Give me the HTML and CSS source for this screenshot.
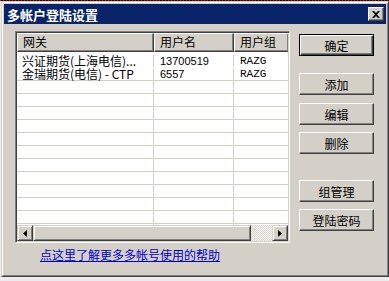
FILE: index.html
```html
<!DOCTYPE html>
<html lang="zh">
<head>
  <meta charset="UTF-8" />
  <title>多帐户登陆设置</title>
  <link rel="stylesheet" href="styles.css">
</head>
<body>

<div class="screen">
  <div class="dialog">
    <div class="titlebar">
      <span class="title">多帐户登陆设置</span>
      <span class="close">
        <svg width="8" height="7" viewBox="0 0 8 7"><path d="M0 0h2l2 2 2-2h2L5 3.5 8 7H6L4 5 2 7H0l3-3.5z" fill="#000"/></svg>
      </span>
    </div>

    <div class="client">
      <div class="main">
        <!-- 帐户列表 -->
        <div class="list">
          <div class="lv-head">
            <div class="hcell c1">网关</div>
            <div class="hcell c2">用户名</div>
            <div class="hcell c3">用户组</div>
          </div>
          <div class="lv-body">
            <div class="row first"><div class="cell c1">兴证期货(上海电信)...</div><div class="cell c2 num">13700519</div><div class="cell c3 mono">RAZG</div></div>
            <div class="row"><div class="cell c1">金瑞期货(电信) - CTP</div><div class="cell c2 num">6557</div><div class="cell c3 mono">RAZG</div></div>
            <div class="row"><div class="cell c1"></div><div class="cell c2"></div><div class="cell c3"></div></div>
            <div class="row"><div class="cell c1"></div><div class="cell c2"></div><div class="cell c3"></div></div>
            <div class="row"><div class="cell c1"></div><div class="cell c2"></div><div class="cell c3"></div></div>
            <div class="row"><div class="cell c1"></div><div class="cell c2"></div><div class="cell c3"></div></div>
            <div class="row"><div class="cell c1"></div><div class="cell c2"></div><div class="cell c3"></div></div>
            <div class="row"><div class="cell c1"></div><div class="cell c2"></div><div class="cell c3"></div></div>
            <div class="row"><div class="cell c1"></div><div class="cell c2"></div><div class="cell c3"></div></div>
            <div class="row"><div class="cell c1"></div><div class="cell c2"></div><div class="cell c3"></div></div>
            <div class="row"><div class="cell c1"></div><div class="cell c2"></div><div class="cell c3"></div></div>
            <div class="row"><div class="cell c1"></div><div class="cell c2"></div><div class="cell c3"></div></div>
            <div class="row"><div class="cell c1"></div><div class="cell c2"></div><div class="cell c3"></div></div>
            <div class="row"><div class="cell c1"></div><div class="cell c2"></div><div class="cell c3"></div></div>
          </div>
          <div class="hscroll">
            <span class="sb-btn"><svg width="4" height="7" viewBox="0 0 4 7"><path d="M4 0v7L0 3.5z" fill="#000"/></svg></span>
            <span class="sb-thumb"></span>
            <span class="sb-track"></span>
            <span class="sb-btn"><svg width="4" height="7" viewBox="0 0 4 7"><path d="M0 0v7l4-3.5z" fill="#000"/></svg></span>
          </div>
        </div>
        <a class="help" href="#">点这里了解更多多帐号使用的帮助</a>
      </div>

      <!-- 按钮 -->
      <div class="buttons">
        <button class="btn default">确定</button>
        <button class="btn b-add">添加</button>
        <button class="btn b-edit">编辑</button>
        <button class="btn b-del">删除</button>
        <button class="btn b-group">组管理</button>
        <button class="btn b-pwd">登陆密码</button>
      </div>
    </div>
  </div>
</div>

</body>
</html>
```

FILE: styles.css
```css
body { margin: 0; font-family: "Noto Sans CJK SC", sans-serif; font-size: 12px; color: #000; }
.screen { width: 389px; height: 281px; overflow: hidden; background: repeating-linear-gradient(90deg, #f00 0 1px, #000 1px 3px) top / 100% 1px no-repeat, #ececec; padding-top: 1px; box-sizing: border-box; }

.dialog { margin-left: 1px; width: 388px; height: 276px; box-sizing: border-box; background: #d4d0c8; border: 1px solid; border-color: #d4d0c8 #404040 #404040 #d4d0c8; box-shadow: inset 1px 1px #fff, inset -1px -1px #808080; padding: 2px; }

.titlebar { height: 20px; background: #0a246a; display: flex; align-items: center; justify-content: space-between; padding: 0 2px 0 3px; }
.title { color: #fff; font-weight: bold; font-size: 13px; line-height: 15px; }
.close { width: 16px; height: 14px; box-sizing: border-box; background: #d4d0c8; border: 1px solid; border-color: #fff #404040 #404040 #fff; box-shadow: inset -1px -1px #808080; display: flex; align-items: center; justify-content: center; }

.client { display: flex; gap: 9px; padding: 7px 0 0 11px; }

.list { width: 275px; height: 212px; box-sizing: border-box; border: 1px solid; border-color: #808080 #fff #fff #808080; box-shadow: inset 1px 1px #404040, inset -1px -1px #d4d0c8; padding: 1px; display: flex; flex-direction: column; overflow: hidden; }
.lv-head { display: flex; height: 19px; flex: none; background: #d4d0c8; }
.hcell { box-sizing: border-box; height: 19px; line-height: 16px; padding-left: 5px; border: 1px solid; border-color: #fff #404040 #404040 #fff; box-shadow: inset -1px -1px #808080; white-space: nowrap; overflow: hidden; }
.lv-body { flex: 1; background: #fff; overflow: hidden; padding-top: 3px; }
.row { display: flex; height: 13px; box-sizing: border-box; border-bottom: 1px solid #d4d0c8; }
.row.first { border-bottom-color: #fff; }
.cell { box-sizing: border-box; height: 12px; line-height: 12px; padding-left: 5px; border-right: 1px solid #d4d0c8; white-space: nowrap; }
.c1 { width: 137px; flex: none; }
.c2 { width: 80px; flex: none; }
.c3 { flex: 1; border-right: none; }
.cell.c2, .cell.c3 { padding-left: 6px; }
.num { font-family: "Liberation Sans", sans-serif; font-size: 11px; }
.mono { font-family: "Liberation Mono", monospace; font-size: 11px; }

.hscroll { display: flex; height: 16px; flex: none; }
.sb-btn { width: 16px; height: 16px; box-sizing: border-box; background: #d4d0c8; border: 1px solid; border-color: #d4d0c8 #404040 #404040 #d4d0c8; box-shadow: inset 1px 1px #fff, inset -1px -1px #808080; display: flex; align-items: center; justify-content: center; flex: none; }
.sb-thumb { width: 218px; box-sizing: border-box; background: #d4d0c8; border: 1px solid; border-color: #d4d0c8 #404040 #404040 #d4d0c8; box-shadow: inset 1px 1px #fff, inset -1px -1px #808080; }
.sb-track { flex: 1; background: repeating-conic-gradient(#fff 0 25%, #d4d0c8 0 50%) 0 0 / 2px 2px; }

.help { display: block; margin: 5px 0 0 25px; line-height: 14px; color: #0000cc; text-decoration: underline; }

.buttons { display: flex; flex-direction: column; padding-top: 3px; }
.btn { width: 75px; height: 22px; box-sizing: border-box; padding: 0; background: #d4d0c8; font-family: "Noto Sans CJK SC", sans-serif; font-size: 12px; color: #000; border: 1px solid; border-color: #fff #404040 #404040 #fff; box-shadow: inset -1px -1px #808080; }
.btn.default { border-color: #000; box-shadow: inset 1px 1px #fff, inset -1px -1px #404040, inset -2px -2px #808080; }
.b-add { margin-top: 17px; }
.b-edit { margin-top: 8px; }
.b-del { margin-top: 7px; }
.b-group { margin-top: 26px; }
.b-pwd { margin-top: 7px; }
```
